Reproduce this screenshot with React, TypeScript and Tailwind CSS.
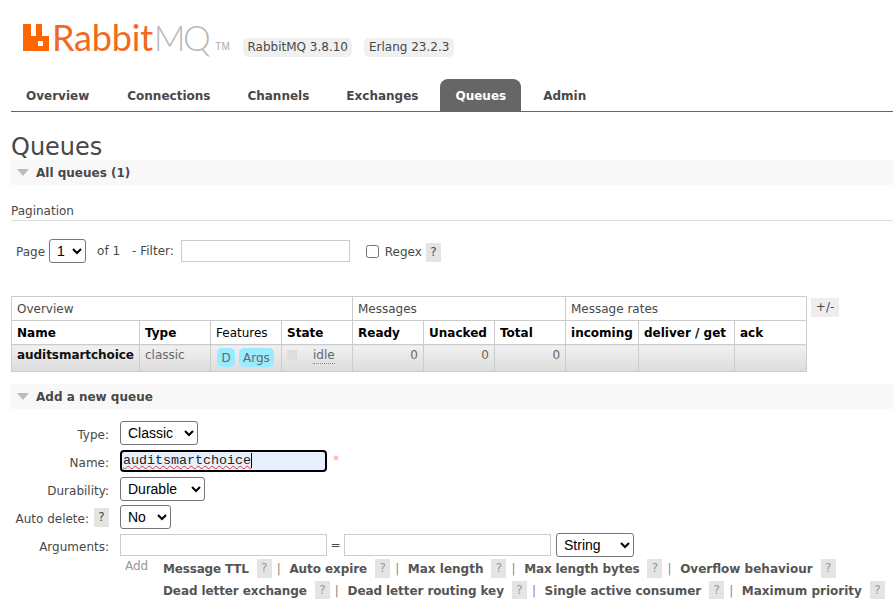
const verdana = "font-['DejaVu_Sans',Verdana,sans-serif]"

function Help({ faded = false }: { faded?: boolean }) {
  return (
    <span className={`block w-[15px] h-[19px] leading-[19px] text-center bg-[#e4e4e4] text-[12px] ${faded ? 'text-[#999]' : 'text-[#484848]'}`}>?</span>
  )
}

function Logo() {
  return (
    <div className="flex items-end h-[34px] w-[206px]">
      <svg width="26" height="27" viewBox="0 0 26 27" className="mb-[6px] shrink-0">
        <path fill="#ff6600" fillRule="evenodd" d="M0 0h8v12h5V0h6v12h7v15H0z M15 17v5h5v-5z" />
      </svg>
      <span className="font-['Lato',sans-serif] text-[36px] leading-[40px] ml-[3px] tracking-[-0.2px] text-[#f26a1b]">Rabbit</span>
      <span className="font-['Lato',sans-serif] font-light text-[35px] leading-[40px] ml-[1px] tracking-[-2.5px] text-[#b9b9b9]">MQ</span>
      <span className="font-['Liberation_Sans',sans-serif] text-[10px] leading-[10px] mb-[5px] ml-[7px] text-[#aaa]">TM</span>
    </div>
  )
}

function Version({ children }: { children: string }) {
  return <span className="bg-[#f0f0f0] rounded-[5px] px-[4.5px] h-[19px] leading-[19px] text-[12px] text-[#484848]">{children}</span>
}

function Tabs() {
  const tabs = ['Overview', 'Connections', 'Channels', 'Exchanges', 'Queues', 'Admin']
  return (
    <div className="flex ml-[11px] h-[33px] border-b border-[#666]">
      {tabs.map(t => (
        <span
          key={t}
          className={`px-[15px] mr-[7px] first:mr-[8px] h-[32px] leading-[35px] text-[12px] font-bold rounded-t-[8px] ${t === 'Queues' ? 'bg-[#666] text-white' : 'text-[#484848]'}`}
        >
          {t}
        </span>
      ))}
    </div>
  )
}

function SectionBar({ title }: { title: string }) {
  return (
    <div className="ml-[11px] h-[25px] bg-[#f8f8f8] flex items-center pl-[6px]">
      <span className="w-0 h-0 border-x-[6px] border-x-transparent border-t-[7px] border-t-[#bbb] mr-[7px]" />
      <span className="text-[12px] font-bold text-[#484848]">{title}</span>
    </div>
  )
}

const th = 'border border-[#ccc] px-[5px] h-[24px] text-left text-[12px] align-middle'
const cell = 'border border-[#ccc] px-[5px] text-[12px] align-top pt-[1px] bg-gradient-to-b from-[#f1f1f1] to-[#dcdcdc]'
const td = `${cell} text-[#666]`

function QueueTable() {
  return (
    <div className="flex items-start ml-[11px] mt-[32px]">
      <table className="table-fixed border-collapse w-[795px]">
        <colgroup>
          <col className="w-[128px]" />
          <col className="w-[71px]" />
          <col className="w-[71px]" />
          <col className="w-[71px]" />
          <col className="w-[71px]" />
          <col className="w-[71px]" />
          <col className="w-[71px]" />
          <col className="w-[73px]" />
          <col className="w-[96px]" />
          <col className="w-[72px]" />
        </colgroup>
        <thead>
          <tr>
            <th colSpan={4} className={`${th} font-normal text-[#484848]`}>Overview</th>
            <th colSpan={3} className={`${th} font-normal text-[#484848]`}>Messages</th>
            <th colSpan={3} className={`${th} font-normal text-[#484848]`}>Message rates</th>
          </tr>
          <tr className="text-black">
            <th className={th}>Name</th>
            <th className={th}>Type</th>
            <th className={`${th} font-normal`}>Features</th>
            <th className={th}>State</th>
            <th className={th}>Ready</th>
            <th className={th}>Unacked</th>
            <th className={th}>Total</th>
            <th className={th}>incoming</th>
            <th className={`${th} whitespace-nowrap`}>deliver / get</th>
            <th className={th}>ack</th>
          </tr>
        </thead>
        <tbody>
          <tr className="h-[27px]">
            <td className={`${cell} font-bold text-[#111] whitespace-nowrap tracking-[-0.05px]`}>auditsmartchoice</td>
            <td className={td}>classic</td>
            <td className={td}>
              <div className="flex gap-[4px] mt-[2px] ml-[1px]">
                <span className="bg-[#99ebff] rounded-[5px] px-[4px] h-[19px] leading-[20px] w-[18px] text-center">D</span>
                <span className="bg-[#99ebff] rounded-[5px] px-[4px] h-[19px] leading-[20px]">Args</span>
              </div>
            </td>
            <td className={td}>
              <div className="flex">
                <span className="w-[10px] h-[10px] bg-[#dddddd] mt-[4px]" />
                <span className="ml-[16px] leading-[16px] mt-[1px] border-b border-dotted border-[#888]">idle</span>
              </div>
            </td>
            <td className={`${td} text-right`}>0</td>
            <td className={`${td} text-right`}>0</td>
            <td className={`${td} text-right`}>0</td>
            <td className={td} />
            <td className={td} />
            <td className={td} />
          </tr>
        </tbody>
      </table>
      <span className="ml-[4px] mt-[2px] w-[28px] h-[19px] leading-[19px] bg-[#eeeeee] text-center text-[12px] text-[#484848]">+/-</span>
    </div>
  )
}

const selectCls = "h-[24px] bg-white border border-[#767676] rounded-[3px] pl-[3px] text-[14px] text-black font-['Liberation_Sans',sans-serif]"

function FormRow({ label, help, children }: { label: string; help?: boolean; children: React.ReactNode }) {
  return (
    <div className="flex items-center h-[28px]">
      <div className="w-[109px] flex justify-end items-center gap-[5px] text-[12px] text-[#484848]">
        <span className="pt-[4px]">{label}:</span>
        {help && <Help />}
      </div>
      <div className="ml-[11px] flex items-center">{children}</div>
    </div>
  )
}

function ArgLink({ label, sep = true, tight = '' }: { label: string; sep?: boolean; tight?: string }) {
  return (
    <span className="flex items-center h-[19px] whitespace-nowrap">
      <b className={`text-[12px] text-[#555] font-bold ${tight}`}>{label}</b>
      <span className="ml-[8px]"><Help faded /></span>
      {sep && <span className="w-[17.7px] pl-[5px] text-[12px] text-[#888]">|</span>}
    </span>
  )
}

export default function App() {
  return (
    <div className={`w-[893px] h-[599px] overflow-hidden bg-white ${verdana}`}>
      <header className="flex items-end h-[57px] pl-[23px]">
        <Logo />
        <div className="flex gap-[12px] ml-[14px]">
          <Version>RabbitMQ 3.8.10</Version>
          <Version>Erlang 23.2.3</Version>
        </div>
      </header>
      <div className="mt-[22px]">
        <Tabs />
      </div>
      <h1 className="ml-[11px] mt-[22px] text-[24px] leading-[26px] text-[#484848]">Queues</h1>
      <SectionBar title="All queues (1)" />
      <div className="ml-[11px] mt-[19px] h-[17px] border-b border-[#ddd] text-[12px] leading-[14px] text-[#484848]">Pagination</div>
      <div className="flex items-center ml-[16px] mt-[17px] h-[26px] text-[12px] text-[#484848]">
        <span className="mt-[2px]">Page</span>
        <select className={`${selectCls} w-[37px] ml-[4px]`} defaultValue="1"><option>1</option></select>
        <span className="ml-[11px]">of 1</span>
        <span className="ml-[12px]">- Filter:</span>
        <input className="ml-[7px] h-[22px] w-[169px] bg-white border border-[#ccc]" />
        <input type="checkbox" className="ml-[16px] w-[13px] h-[13px]" />
        <span className="ml-[6px] mt-[2px]">Regex</span>
        <span className="ml-[4px] mt-[2px]"><Help /></span>
      </div>
      <QueueTable />
      <div className="mt-[12px]">
        <SectionBar title="Add a new queue" />
      </div>
      <form className="mt-[10px]">
        <FormRow label="Type">
          <select className={`${selectCls} w-[78px]`} defaultValue="Classic"><option>Classic</option></select>
        </FormRow>
        <FormRow label="Name">
          <div className="h-[22px] w-[207px] bg-[#e8f0fe] border-2 border-black rounded-[4px] pl-[1px] font-['Liberation_Mono',monospace] text-[13.33px] leading-[18px] text-[#222]">
            <span className="underline decoration-wavy decoration-[#d33] decoration-1 border-r border-black">auditsmartchoice</span>
          </div>
          <span className="ml-[6px] -mt-[2px] text-[#f99] text-[12px]">*</span>
        </FormRow>
        <FormRow label="Durability">
          <select className={`${selectCls} w-[85px]`} defaultValue="Durable"><option>Durable</option></select>
        </FormRow>
        <FormRow label="Auto delete" help>
          <select className={`${selectCls} w-[51px]`} defaultValue="No"><option>No</option></select>
        </FormRow>
        <FormRow label="Arguments">
          <input className="h-[22px] w-[207px] bg-white border border-[#ccc]" />
          <span className="w-[17px] text-center text-[12px] text-[#484848]">=</span>
          <input className="h-[22px] w-[207px] bg-white border border-[#ccc]" />
          <select className={`${selectCls} w-[78px] ml-[5px]`} defaultValue="String"><option>String</option></select>
        </FormRow>
        <div className="flex ml-[120px]">
          <span className="w-[43px] shrink-0 pl-[5px] -mt-[2px] text-[12px] text-[#999]">Add</span>
          <div className="flex flex-col gap-[3px]">
            <div className="flex">
              <ArgLink label="Message TTL" tight="tracking-[-0.18px]" />
              <ArgLink label="Auto expire" tight="tracking-[-0.08px]" />
              <ArgLink label="Max length" />
              <ArgLink label="Max length bytes" tight="tracking-[-0.12px]" />
              <ArgLink label="Overflow behaviour" sep={false} />
            </div>
            <div className="flex">
              <ArgLink label="Dead letter exchange" tight="tracking-[-0.1px]" />
              <ArgLink label="Dead letter routing key" tight="tracking-[-0.09px]" />
              <ArgLink label="Single active consumer" tight="tracking-[-0.05px]" />
              <ArgLink label="Maximum priority" sep={false} />
            </div>
          </div>
        </div>
      </form>
    </div>
  )
}
